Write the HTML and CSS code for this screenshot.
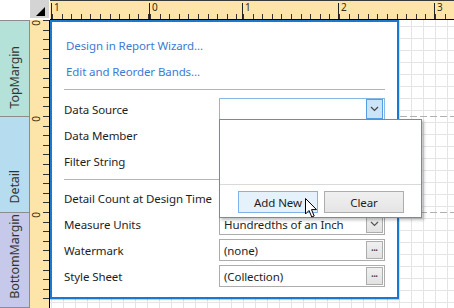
FILE: index.html
```html
<!DOCTYPE html>
<html>
<head>
  <meta charset="UTF-8">
  <title>Report Designer</title>
  <link rel="stylesheet" href="styles.css">
</head>
<body>
  <div class="designer">
    <div class="blank"></div>
    <div class="corner">
      <svg width="9" height="9" viewBox="0 0 9 9"><polygon points="9,0 9,9 0,9" fill="#000"/></svg>
    </div>
    <div class="hruler">
      <div class="inch w98"><span>1</span></div>
      <div class="inch w93"><span>0</span></div>
      <div class="inch w96"><span>1</span></div>
      <div class="inch w96"><span>2</span></div>
      <div class="inch rest"><span>3</span></div>
    </div>

    <div class="bands">
      <div class="band top-margin"><span>TopMargin</span></div>
      <div class="band detail"><span>Detail</span></div>
      <div class="band bottom-margin"><span>BottomMargin</span></div>
    </div>
    <div class="vruler">
      <div class="vseg"><span>0</span></div>
      <div class="vseg"><span>0</span></div>
      <div class="vseg"><span>0</span></div>
    </div>

    <div class="surface">
      <div class="area first"></div>
      <div class="area"></div>
      <div class="area last"></div>

      <div class="panel">
        <a class="link" href="#">Design in Report Wizard...</a>
        <a class="link" href="#">Edit and Reorder Bands...</a>
        <div class="sep"></div>

        <div class="row">
          <div class="label">Data Source</div>
          <div class="field focused">
            <span class="value"></span>
            <span class="btn drop">
              <svg width="9" height="6" viewBox="0 0 9 6"><polyline points="1,1 4.5,4.5 8,1" fill="none" stroke="#444" stroke-width="1.2"/></svg>
            </span>
            <div class="dropdown">
              <div class="list"></div>
              <div class="actions">
                <button class="pbtn add">Add New
                  <svg class="cursor" width="13" height="20" viewBox="0 0 13 20"><path d="M0.5 0.5 V16 L4 12.5 L6.8 19 L9.2 18 L6.5 11.6 H11.5 Z" fill="#fff" stroke="#000" stroke-width="1" stroke-linejoin="round"/></svg>
                </button>
                <button class="pbtn clear">Clear</button>
              </div>
            </div>
          </div>
        </div>
        <div class="row">
          <div class="label">Data Member</div>
        </div>
        <div class="row">
          <div class="label">Filter String</div>
        </div>
        <div class="sep sep2"></div>

        <div class="row">
          <div class="label">Detail Count at Design Time</div>
        </div>
        <div class="row">
          <div class="label">Measure Units</div>
          <div class="field">
            <span class="value">Hundredths of an Inch</span>
            <span class="btn gray">
              <svg width="9" height="6" viewBox="0 0 9 6"><polyline points="1,1 4.5,4.5 8,1" fill="none" stroke="#555" stroke-width="1.2"/></svg>
            </span>
          </div>
        </div>
        <div class="row">
          <div class="label">Watermark</div>
          <div class="field">
            <span class="value">(none)</span>
            <span class="btn gray dots">&middot;&middot;&middot;</span>
          </div>
        </div>
        <div class="row">
          <div class="label">Style Sheet</div>
          <div class="field">
            <span class="value">(Collection)</span>
            <span class="btn gray dots">&middot;&middot;&middot;</span>
          </div>
        </div>
      </div>
    </div>
  </div>
</body>
</html>
```

FILE: styles.css
```css
* {
  box-sizing: border-box;
}
body {
  margin: 0;
  font-family: "Noto Sans", "Open Sans", sans-serif;
  font-size: 11.5px;
  letter-spacing: -0.1px;
  color: #1e1e1e;
  background: #fff;
}
.designer {
  display: grid;
  grid-template-columns: 30px 20px 1fr;
  grid-template-rows: 20px 288px;
  width: 454px;
  height: 308px;
  overflow: hidden;
}

/* corner + rulers */
.corner {
  display: flex;
  justify-content: flex-end;
  align-items: flex-end;
  background: #d4d4d4;
  margin: 0 1px 2px 0;
  padding: 0 4px 2px 0;
}
.hruler {
  display: flex;
  align-items: flex-end;
  background: #fde4a8;
  border-top: 1px solid #3a3a3a;
  border-bottom: 1px solid #000;
  padding-left: 1px;
}
.inch {
  flex: none;
  height: 16px;
  border-left: 1px solid #222;
  background: repeating-linear-gradient(to right, #333 0 1px, transparent 1px 9.6px) left bottom / 100% 5px no-repeat;
}
.inch span {
  display: block;
  padding-left: 2px;
  font-size: 10px;
  line-height: 9px;
  color: #3a2a10;
}
.w98 { width: 98px; }
.w93 { width: 93px; }
.w96 { width: 96px; }
.rest { flex: 1; }

.vruler {
  display: flex;
  flex-direction: column;
  background: #fde4a8;
  border-right: 1px solid #000;
}
.vseg {
  height: 96px;
  flex: none;
  padding: 0 0 0 2px;
  background: repeating-linear-gradient(to bottom, #333 0 1px, transparent 1px 9.6px) right top / 6px 100% no-repeat;
}
.vseg span {
  display: block;
  writing-mode: vertical-rl;
  transform: rotate(180deg);
  font-size: 10px;
  line-height: 9px;
  color: #3a2a10;
}

/* band strip */
.bands {
  display: flex;
  flex-direction: column;
  border-top: 1px solid #8c8c8c;
  border-right: 1px solid #8c8c8c;
}
.band {
  display: flex;
  flex-direction: column;
  justify-content: flex-end;
  align-items: center;
  height: 96px;
  flex: none;
  padding-bottom: 8px;
  border-bottom: 1px solid #8c8c8c;
  color: #333;
  font-size: 12.5px;
}
.band span {
  writing-mode: vertical-rl;
  transform: rotate(180deg);
}
.top-margin { background: #b4e2d8; }
.detail { background: #b6dcf0; }
.bottom-margin { background: #c6c9ea; flex: 1; }

/* design surface */
.surface {
  position: relative;
  display: flex;
  flex-direction: column;
  background-color: #fff;
  background-image:
    linear-gradient(to right, #e4e4e4 1px, transparent 1px),
    linear-gradient(to bottom, #e4e4e4 1px, transparent 1px);
  background-size: 12px 12px;
  background-position: 1px 6px;
}
.area {
  display: flex;
  flex-direction: column;
  justify-content: flex-end;
  height: 96px;
  flex: none;
}
.area.first { height: 97px; }
.area.last { flex: 1; }
.area::after {
  content: "";
  height: 1px;
  background: repeating-linear-gradient(to right, #b0b0b0 0 7px, transparent 7px 10px);
}
.area.last::after { display: none; }

/* smart tag panel */
.panel {
  position: absolute;
  top: 0;
  left: 0;
  width: 349px;
  height: 279px;
  background: #fff;
  border: 2px solid #1979d2;
  box-shadow: 0 1px 1px rgba(0, 0, 0, 0.2);
  padding: 11px 12px 0;
}
.link {
  display: block;
  height: 26px;
  line-height: 26px;
  padding-left: 2px;
  color: #3b7bd4;
  text-decoration: none;
}
.sep {
  height: 1px;
  background: #b4b4b4;
  margin: 4px 0 6px;
}
.sep2 {
  margin: 5px 0;
}
.row {
  display: flex;
  align-items: center;
  height: 26px;
}
.label {
  width: 155px;
  flex: none;
  white-space: nowrap;
}
.field {
  position: relative;
  flex: 1;
  display: flex;
  align-items: center;
  height: 22px;
  border: 1px solid #acacac;
  padding-left: 4px;
}
.field.focused {
  border-color: #86b9e6;
}
.value {
  flex: 1;
  white-space: nowrap;
}
.btn {
  display: flex;
  align-items: center;
  justify-content: center;
  width: 17px;
  height: 18px;
  margin-right: 1px;
}
.btn.drop {
  height: 20px;
  background: #cce4f7;
  border: 1px solid #569de5;
}
.btn.gray {
  background: linear-gradient(#f0f0f0, #e2e2e2);
  border: 1px solid #adadad;
}
.btn.dots {
  font-size: 12px;
  letter-spacing: -1px;
  color: #444;
  padding-right: 1px;
}

/* dropdown popup */
.dropdown {
  position: absolute;
  top: 100%;
  left: -1px;
  width: 203px;
  background: #fff;
  border: 1px solid #828790;
  box-shadow: 2px 2px 3px rgba(0, 0, 0, 0.25);
  z-index: 2;
}
.list {
  height: 64px;
}
.actions {
  display: flex;
  gap: 6px;
  border-top: 1px solid #d9d9d9;
  padding: 6px 0 4px 18px;
}
.pbtn {
  position: relative;
  width: 80px;
  height: 22px;
  font-family: inherit;
  font-size: 11.5px;
  letter-spacing: -0.1px;
  color: #1e1e1e;
  padding: 0;
}
.pbtn.add {
  background: #e5f1fb;
  border: 1px solid #7eb4ea;
}
.pbtn.clear {
  background: linear-gradient(#f0f0f0, #e5e5e5);
  border: 1px solid #adadad;
}
.cursor {
  position: absolute;
  left: 66px;
  top: 6px;
}
```
